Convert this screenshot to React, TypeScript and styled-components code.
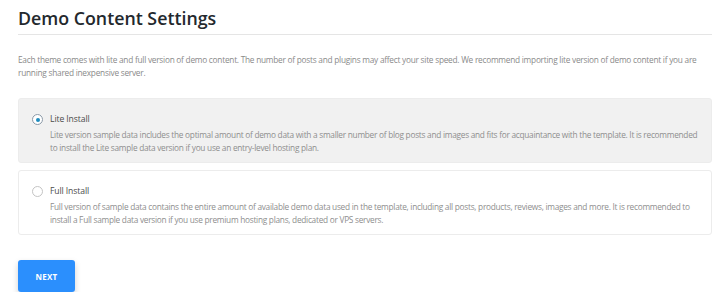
import React, { useState } from "react";
import styled, { createGlobalStyle } from "styled-components";

const Global = createGlobalStyle`
  html, body { margin: 0; padding: 0; background: #ffffff; }
  body { font-family: "Open Sans", "Noto Sans", sans-serif; }
`;

const Page = styled.div`
  padding: 6px 8px 0 18px;
  width: 720px;
  box-sizing: border-box;
`;

const Title = styled.h1`
  margin: 0;
  font-size: 17.8px;
  font-weight: 600;
  color: #23282d;
  line-height: 24px;
  padding-bottom: 4px;
  border-bottom: 1px solid #e5e5e5;
`;

const Intro = styled.p`
  margin: 18px 0 0;
  font-size: 8.3px;
  letter-spacing: -0.25px;
  line-height: 13px;
  color: #8a8a8a;
`;

const Options = styled.div`
  margin-top: 19px;
  display: flex;
  flex-direction: column;
  gap: 7px;
`;

const Card = styled.label<{ $active: boolean }>`
  display: flex;
  gap: 7px;
  padding: 13px 12px 13px 13px;
  height: 65px;
  box-sizing: border-box;
  border-radius: 3px;
  border: 1px solid #ececec;
  background: ${(p) => (p.$active ? "#f1f1f1" : "#ffffff")};
  cursor: pointer;
`;

const Radio = styled.span<{ $checked: boolean }>`
  flex: none;
  width: 9px;
  height: 9px;
  margin-top: 2px;
  border-radius: 50%;
  border: 1px solid ${(p) => (p.$checked ? "#8c9aa8" : "#c4c4c4")};
  background: #ffffff;
  display: flex;
  align-items: center;
  justify-content: center;
  &::after {
    content: "";
    width: 4px;
    height: 4px;
    border-radius: 50%;
    background: ${(p) => (p.$checked ? "#1e8cbe" : "transparent")};
  }
`;

const Body = styled.div`
  display: flex;
  flex-direction: column;
`;

const OptionTitle = styled.div`
  font-size: 8.6px;
  letter-spacing: -0.1px;
  line-height: 14px;
  color: #4a4a4a;
  margin-bottom: 2px;
`;

const OptionText = styled.div`
  font-size: 8.3px;
  letter-spacing: -0.27px;
  line-height: 13px;
  color: #8e8e8e;
`;

const NextButton = styled.button`
  margin-top: 25px;
  width: 57px;
  height: 32px;
  border: none;
  border-radius: 3px;
  background: #2b8ffd;
  color: #ffffff;
  font-family: "Open Sans", "Noto Sans", sans-serif;
  font-size: 8px;
  font-weight: 700;
  letter-spacing: 0.2px;
  box-shadow: 0 3px 6px rgba(0, 0, 0, 0.18);
  cursor: pointer;
`;

const options = [
  {
    id: "lite",
    title: "Lite Install",
    text: "Lite version sample data includes the optimal amount of demo data with a smaller number of blog posts and images and fits for acquaintance with the template. It is recommended to install the Lite sample data version if you use an entry-level hosting plan.",
  },
  {
    id: "full",
    title: "Full Install",
    text: "Full version of sample data contains the entire amount of available demo data used in the template, including all posts, products, reviews, images and more. It is recommended to install a Full sample data version if you use premium hosting plans, dedicated or VPS servers.",
  },
];

export default function App() {
  const [choice, setChoice] = useState("lite");
  return (
    <>
      <Global />
      <Page>
        <Title>Demo Content Settings</Title>
        <Intro>
          Each theme comes with lite and full version of demo content. The number of posts and plugins may affect your site speed. We recommend importing lite version of demo content if you are running shared inexpensive server.
        </Intro>
        <Options>
          {options.map((o) => (
            <Card key={o.id} $active={choice === o.id} onClick={() => setChoice(o.id)}>
              <Radio $checked={choice === o.id} />
              <Body>
                <OptionTitle>{o.title}</OptionTitle>
                <OptionText>{o.text}</OptionText>
              </Body>
            </Card>
          ))}
        </Options>
        <NextButton>NEXT</NextButton>
      </Page>
    </>
  );
}
